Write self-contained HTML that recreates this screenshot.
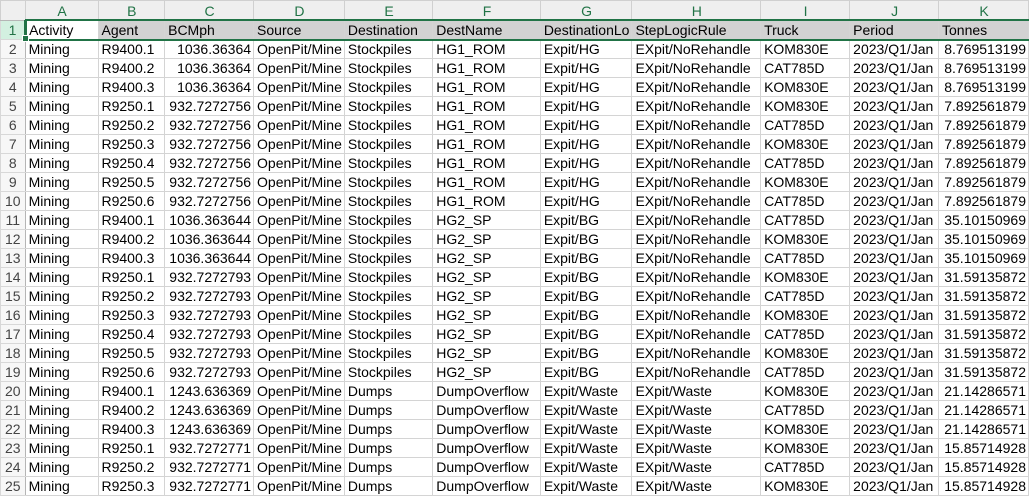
<!DOCTYPE html><html><head><style>
body{margin:0;width:1029px;height:497px;overflow:hidden;background:#fff;font-family:"Liberation Sans",Arial,sans-serif;font-size:14px;color:#000}
table{border-collapse:collapse;table-layout:fixed;position:absolute;left:0;top:0}
td{height:18px;padding:0 2px 0 3px;border:1px solid #d4d4d4;white-space:nowrap;overflow:hidden;line-height:18px}
tr.h td{height:19px;background:#efefef;color:#217346;text-align:center;border-color:#d0d0d0;border-bottom:1px solid #b5b5b5}
td.n{background:#f7f7f7;color:#444;text-align:center;padding:0;border-color:#d8d8d8;border-right:1px solid #b5b5b5}
td.r{text-align:right}
tr.s td{background:#d2d2d2}
tr.s td.a{background:#fff}
tr.s td.n{background:#d3f0e0;color:#217346;border-right:2px solid #217346}
.sel{position:absolute;left:25px;top:19px;width:1004px;height:18px;border:2px solid #217346;border-right:none;pointer-events:none}
.h2{position:absolute;left:22px;top:35px;width:5px;height:5px;background:#217346;border:1px solid #fff}
</style></head><body>
<table>
<colgroup><col style="width:25px"><col style="width:74px"><col style="width:67px"><col style="width:89px"><col style="width:89px"><col style="width:89px"><col style="width:108px"><col style="width:90px"><col style="width:129px"><col style="width:90px"><col style="width:89px"><col style="width:90px"></colgroup>
<tr class="h"><td></td><td>A</td><td>B</td><td>C</td><td>D</td><td>E</td><td>F</td><td>G</td><td>H</td><td>I</td><td>J</td><td>K</td></tr>
<tr class="s"><td class="n">1</td><td class="a">Activity</td><td>Agent</td><td>BCMph</td><td>Source</td><td>Destination</td><td>DestName</td><td>DestinationLo</td><td>StepLogicRule</td><td>Truck</td><td>Period</td><td>Tonnes</td></tr>
<tr><td class="n">2</td><td>Mining</td><td>R9400.1</td><td class="r">1036.36364</td><td>OpenPit/Mine</td><td>Stockpiles</td><td>HG1_ROM</td><td>Expit/HG</td><td>EXpit/NoRehandle</td><td>KOM830E</td><td>2023/Q1/Jan</td><td class="r">8.769513199</td></tr>
<tr><td class="n">3</td><td>Mining</td><td>R9400.2</td><td class="r">1036.36364</td><td>OpenPit/Mine</td><td>Stockpiles</td><td>HG1_ROM</td><td>Expit/HG</td><td>EXpit/NoRehandle</td><td>CAT785D</td><td>2023/Q1/Jan</td><td class="r">8.769513199</td></tr>
<tr><td class="n">4</td><td>Mining</td><td>R9400.3</td><td class="r">1036.36364</td><td>OpenPit/Mine</td><td>Stockpiles</td><td>HG1_ROM</td><td>Expit/HG</td><td>EXpit/NoRehandle</td><td>KOM830E</td><td>2023/Q1/Jan</td><td class="r">8.769513199</td></tr>
<tr><td class="n">5</td><td>Mining</td><td>R9250.1</td><td class="r">932.7272756</td><td>OpenPit/Mine</td><td>Stockpiles</td><td>HG1_ROM</td><td>Expit/HG</td><td>EXpit/NoRehandle</td><td>KOM830E</td><td>2023/Q1/Jan</td><td class="r">7.892561879</td></tr>
<tr><td class="n">6</td><td>Mining</td><td>R9250.2</td><td class="r">932.7272756</td><td>OpenPit/Mine</td><td>Stockpiles</td><td>HG1_ROM</td><td>Expit/HG</td><td>EXpit/NoRehandle</td><td>CAT785D</td><td>2023/Q1/Jan</td><td class="r">7.892561879</td></tr>
<tr><td class="n">7</td><td>Mining</td><td>R9250.3</td><td class="r">932.7272756</td><td>OpenPit/Mine</td><td>Stockpiles</td><td>HG1_ROM</td><td>Expit/HG</td><td>EXpit/NoRehandle</td><td>KOM830E</td><td>2023/Q1/Jan</td><td class="r">7.892561879</td></tr>
<tr><td class="n">8</td><td>Mining</td><td>R9250.4</td><td class="r">932.7272756</td><td>OpenPit/Mine</td><td>Stockpiles</td><td>HG1_ROM</td><td>Expit/HG</td><td>EXpit/NoRehandle</td><td>CAT785D</td><td>2023/Q1/Jan</td><td class="r">7.892561879</td></tr>
<tr><td class="n">9</td><td>Mining</td><td>R9250.5</td><td class="r">932.7272756</td><td>OpenPit/Mine</td><td>Stockpiles</td><td>HG1_ROM</td><td>Expit/HG</td><td>EXpit/NoRehandle</td><td>KOM830E</td><td>2023/Q1/Jan</td><td class="r">7.892561879</td></tr>
<tr><td class="n">10</td><td>Mining</td><td>R9250.6</td><td class="r">932.7272756</td><td>OpenPit/Mine</td><td>Stockpiles</td><td>HG1_ROM</td><td>Expit/HG</td><td>EXpit/NoRehandle</td><td>CAT785D</td><td>2023/Q1/Jan</td><td class="r">7.892561879</td></tr>
<tr><td class="n">11</td><td>Mining</td><td>R9400.1</td><td class="r">1036.363644</td><td>OpenPit/Mine</td><td>Stockpiles</td><td>HG2_SP</td><td>Expit/BG</td><td>EXpit/NoRehandle</td><td>CAT785D</td><td>2023/Q1/Jan</td><td class="r">35.10150969</td></tr>
<tr><td class="n">12</td><td>Mining</td><td>R9400.2</td><td class="r">1036.363644</td><td>OpenPit/Mine</td><td>Stockpiles</td><td>HG2_SP</td><td>Expit/BG</td><td>EXpit/NoRehandle</td><td>KOM830E</td><td>2023/Q1/Jan</td><td class="r">35.10150969</td></tr>
<tr><td class="n">13</td><td>Mining</td><td>R9400.3</td><td class="r">1036.363644</td><td>OpenPit/Mine</td><td>Stockpiles</td><td>HG2_SP</td><td>Expit/BG</td><td>EXpit/NoRehandle</td><td>CAT785D</td><td>2023/Q1/Jan</td><td class="r">35.10150969</td></tr>
<tr><td class="n">14</td><td>Mining</td><td>R9250.1</td><td class="r">932.7272793</td><td>OpenPit/Mine</td><td>Stockpiles</td><td>HG2_SP</td><td>Expit/BG</td><td>EXpit/NoRehandle</td><td>KOM830E</td><td>2023/Q1/Jan</td><td class="r">31.59135872</td></tr>
<tr><td class="n">15</td><td>Mining</td><td>R9250.2</td><td class="r">932.7272793</td><td>OpenPit/Mine</td><td>Stockpiles</td><td>HG2_SP</td><td>Expit/BG</td><td>EXpit/NoRehandle</td><td>CAT785D</td><td>2023/Q1/Jan</td><td class="r">31.59135872</td></tr>
<tr><td class="n">16</td><td>Mining</td><td>R9250.3</td><td class="r">932.7272793</td><td>OpenPit/Mine</td><td>Stockpiles</td><td>HG2_SP</td><td>Expit/BG</td><td>EXpit/NoRehandle</td><td>KOM830E</td><td>2023/Q1/Jan</td><td class="r">31.59135872</td></tr>
<tr><td class="n">17</td><td>Mining</td><td>R9250.4</td><td class="r">932.7272793</td><td>OpenPit/Mine</td><td>Stockpiles</td><td>HG2_SP</td><td>Expit/BG</td><td>EXpit/NoRehandle</td><td>CAT785D</td><td>2023/Q1/Jan</td><td class="r">31.59135872</td></tr>
<tr><td class="n">18</td><td>Mining</td><td>R9250.5</td><td class="r">932.7272793</td><td>OpenPit/Mine</td><td>Stockpiles</td><td>HG2_SP</td><td>Expit/BG</td><td>EXpit/NoRehandle</td><td>KOM830E</td><td>2023/Q1/Jan</td><td class="r">31.59135872</td></tr>
<tr><td class="n">19</td><td>Mining</td><td>R9250.6</td><td class="r">932.7272793</td><td>OpenPit/Mine</td><td>Stockpiles</td><td>HG2_SP</td><td>Expit/BG</td><td>EXpit/NoRehandle</td><td>CAT785D</td><td>2023/Q1/Jan</td><td class="r">31.59135872</td></tr>
<tr><td class="n">20</td><td>Mining</td><td>R9400.1</td><td class="r">1243.636369</td><td>OpenPit/Mine</td><td>Dumps</td><td>DumpOverflow</td><td>Expit/Waste</td><td>EXpit/Waste</td><td>KOM830E</td><td>2023/Q1/Jan</td><td class="r">21.14286571</td></tr>
<tr><td class="n">21</td><td>Mining</td><td>R9400.2</td><td class="r">1243.636369</td><td>OpenPit/Mine</td><td>Dumps</td><td>DumpOverflow</td><td>Expit/Waste</td><td>EXpit/Waste</td><td>CAT785D</td><td>2023/Q1/Jan</td><td class="r">21.14286571</td></tr>
<tr><td class="n">22</td><td>Mining</td><td>R9400.3</td><td class="r">1243.636369</td><td>OpenPit/Mine</td><td>Dumps</td><td>DumpOverflow</td><td>Expit/Waste</td><td>EXpit/Waste</td><td>KOM830E</td><td>2023/Q1/Jan</td><td class="r">21.14286571</td></tr>
<tr><td class="n">23</td><td>Mining</td><td>R9250.1</td><td class="r">932.7272771</td><td>OpenPit/Mine</td><td>Dumps</td><td>DumpOverflow</td><td>Expit/Waste</td><td>EXpit/Waste</td><td>KOM830E</td><td>2023/Q1/Jan</td><td class="r">15.85714928</td></tr>
<tr><td class="n">24</td><td>Mining</td><td>R9250.2</td><td class="r">932.7272771</td><td>OpenPit/Mine</td><td>Dumps</td><td>DumpOverflow</td><td>Expit/Waste</td><td>EXpit/Waste</td><td>CAT785D</td><td>2023/Q1/Jan</td><td class="r">15.85714928</td></tr>
<tr><td class="n">25</td><td>Mining</td><td>R9250.3</td><td class="r">932.7272771</td><td>OpenPit/Mine</td><td>Dumps</td><td>DumpOverflow</td><td>Expit/Waste</td><td>EXpit/Waste</td><td>KOM830E</td><td>2023/Q1/Jan</td><td class="r">15.85714928</td></tr>
</table>
<div class="sel"></div><div class="h2"></div>
</body></html>
